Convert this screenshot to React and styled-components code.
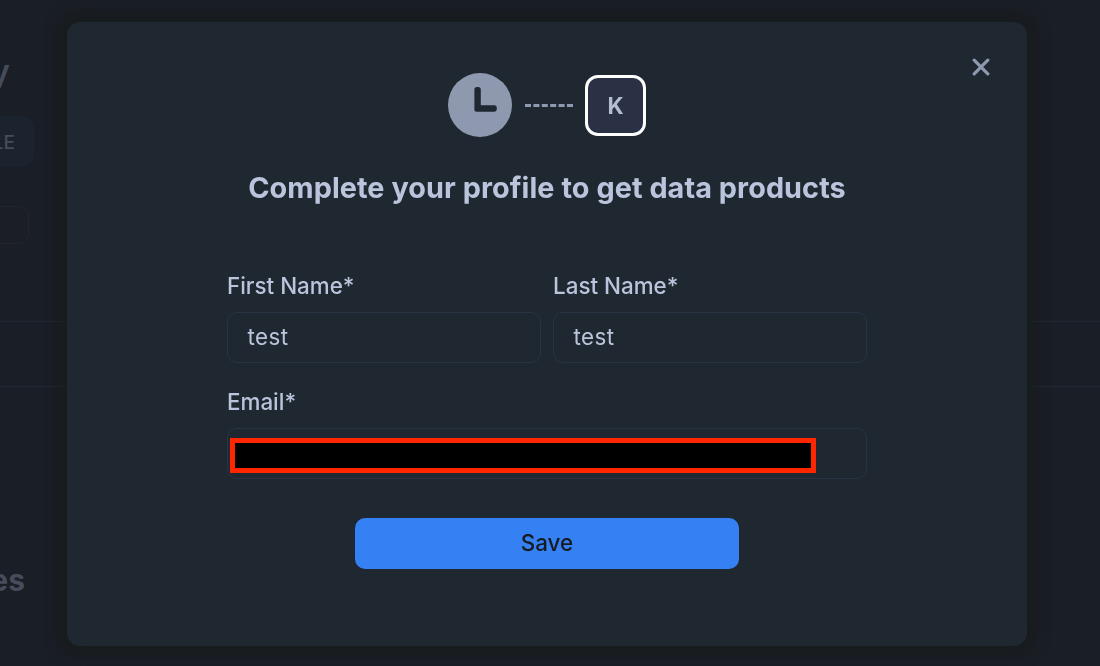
import React from 'react'
import styled, { createGlobalStyle } from 'styled-components'

function Field({ label, value, children }) {
  return (
    <FieldBox>
      <Label>{label}</Label>
      <InputBox>
        {value && <Value>{value}</Value>}
        {children}
      </InputBox>
    </FieldBox>
  )
}

function ProfilePage() {
  return (
    <Page>
      <PageTop>
        <PageTitle>y</PageTitle>
        <TypeTag>LE</TypeTag>
        <EmptyTag />
      </PageTop>
      <TabBar />
      <SectionTitle>es</SectionTitle>
    </Page>
  )
}

function ClockIcon() {
  return (
    <svg width="64" height="64" viewBox="0 0 64 64" fill="none">
      <circle cx="32" cy="32" r="32" fill="#8e99b0" />
      <path
        d="M26.4 16.6a2.6 2.6 0 0 1 2.6-2.6h1.2a2.6 2.6 0 0 1 2.6 2.6v15.7h13.6a2.4 2.4 0 0 1 2.4 2.4v1.6a2.4 2.4 0 0 1-2.4 2.4H28.4a2 2 0 0 1-2-2z"
        fill="#1f2730"
      />
    </svg>
  )
}

function App() {
  return (
    <>
      <GlobalStyle />
      <ProfilePage />
      <Overlay>
        <Modal>
          <CloseButton aria-label="Close">
            <svg width="18" height="18" viewBox="0 0 18 18" fill="none">
              <path d="M2.2 2.2l13.6 13.6M15.8 2.2L2.2 15.8" stroke="#8e99b0" strokeWidth="3.2" strokeLinecap="round" />
            </svg>
          </CloseButton>
          <Logos>
            <ClockIcon />
            <Dashes />
            <Avatar>K</Avatar>
          </Logos>
          <Title>Complete your profile to get data products</Title>
          <Form>
            <Row>
              <Field label="First Name*" value="test" />
              <Field label="Last Name*" value="test" />
            </Row>
            <Field label="Email*">
              <Redacted />
            </Field>
          </Form>
          <SaveButton>Save</SaveButton>
        </Modal>
      </Overlay>
    </>
  )
}

const GlobalStyle = createGlobalStyle`
  * {
    box-sizing: border-box;
  }
  body {
    margin: 0;
    background: #1a1e26;
    font-family: Inter, "Liberation Sans", sans-serif;
    overflow: hidden;
  }
`

const Page = styled.div`
  height: 666px;
  overflow: hidden;
`

const PageTop = styled.div`
  display: flex;
  flex-direction: column;
  height: 321px;
  padding-top: 52px;
`

const PageTitle = styled.div`
  display: flex;
  justify-content: flex-end;
  width: 10px;
  height: 40px;
  font-size: 33px;
  line-height: 38px;
  font-weight: 600;
  color: #464c5a;
`

const TypeTag = styled.div`
  display: flex;
  align-items: center;
  justify-content: flex-end;
  width: 34px;
  height: 51px;
  margin-top: 24px;
  padding: 1px 19px 0 0;
  border-radius: 0 12px 12px 0;
  background: #1b232e;
  font-size: 19.2px;
  font-weight: 500;
  color: #464c5a;
`

const EmptyTag = styled.div`
  width: 29px;
  height: 38px;
  margin-top: 39px;
  border: 1px solid #20252e;
  border-left: none;
  border-radius: 0 10px 10px 0;
  background: #1b1e27;
`

const TabBar = styled.div`
  height: 66px;
  border-top: 1px solid #212831;
  border-bottom: 1px solid #212831;
`

const SectionTitle = styled.div`
  display: flex;
  justify-content: flex-end;
  width: 25px;
  margin-top: 175px;
  font-size: 30px;
  line-height: 36px;
  font-weight: 700;
  color: #464c5a;
`

const Overlay = styled.div`
  position: fixed;
  inset: 0;
  padding: 22px 73px 20px 67px;
`

const Modal = styled.div`
  position: relative;
  display: flex;
  flex-direction: column;
  align-items: center;
  height: 624px;
  padding-top: 51px;
  border-radius: 13px;
  background: #1f2730;
  box-shadow: 0 0 14px 9px rgba(23, 27, 26, 0.7);
`

const CloseButton = styled.button`
  position: absolute;
  top: 36px;
  right: 37px;
  display: flex;
  padding: 0;
  border: none;
  background: none;
`

const Logos = styled.div`
  display: flex;
  align-items: center;
  height: 64px;
`

const Dashes = styled.div`
  width: 48px;
  margin: 0 12px 0 13px;
  border-top: 3px dashed #8e99b0;
`

const Avatar = styled.div`
  display: flex;
  align-items: center;
  justify-content: center;
  width: 61px;
  height: 61px;
  border: 3px solid #fff;
  border-radius: 13px;
  background: #2a3144;
  font-size: 22.4px;
  font-weight: 700;
  color: #b4bed2;
`

const Title = styled.h1`
  margin: 33px 0 0;
  font-size: 28.8px;
  line-height: 36px;
  font-weight: 700;
  letter-spacing: 0.07px;
  color: #bac4dc;
  white-space: nowrap;
`

const Form = styled.div`
  display: flex;
  flex-direction: column;
  gap: 25px;
  width: 640px;
  margin-top: 66px;
`

const Row = styled.div`
  display: flex;
  gap: 12px;
`

const FieldBox = styled.label`
  flex: 1;
  display: flex;
  flex-direction: column;
`

const Label = styled.span`
  height: 28px;
  margin-bottom: 12px;
  font-size: 22.4px;
  line-height: 28px;
  font-weight: 500;
  color: #bac4dc;
`

const InputBox = styled.div`
  display: flex;
  align-items: center;
  height: 51px;
  border: 1px solid #283344;
  border-radius: 10px;
`

const Value = styled.span`
  padding: 0 0 2px 19.5px;
  font-size: 22.4px;
  letter-spacing: 0.4px;
  color: #bac4dc;
`

const Redacted = styled.div`
  width: 586px;
  height: 35px;
  margin: 3px 0 0 2px;
  border: 5px solid #ff2600;
  background: #000;
`

const SaveButton = styled.button`
  width: 384px;
  height: 51px;
  margin-top: 39px;
  padding: 0 0 2px;
  border: none;
  border-radius: 10px;
  background: #3581f4;
  font-family: inherit;
  font-size: 22.4px;
  font-weight: 500;
  color: #161b22;
`

export default App
